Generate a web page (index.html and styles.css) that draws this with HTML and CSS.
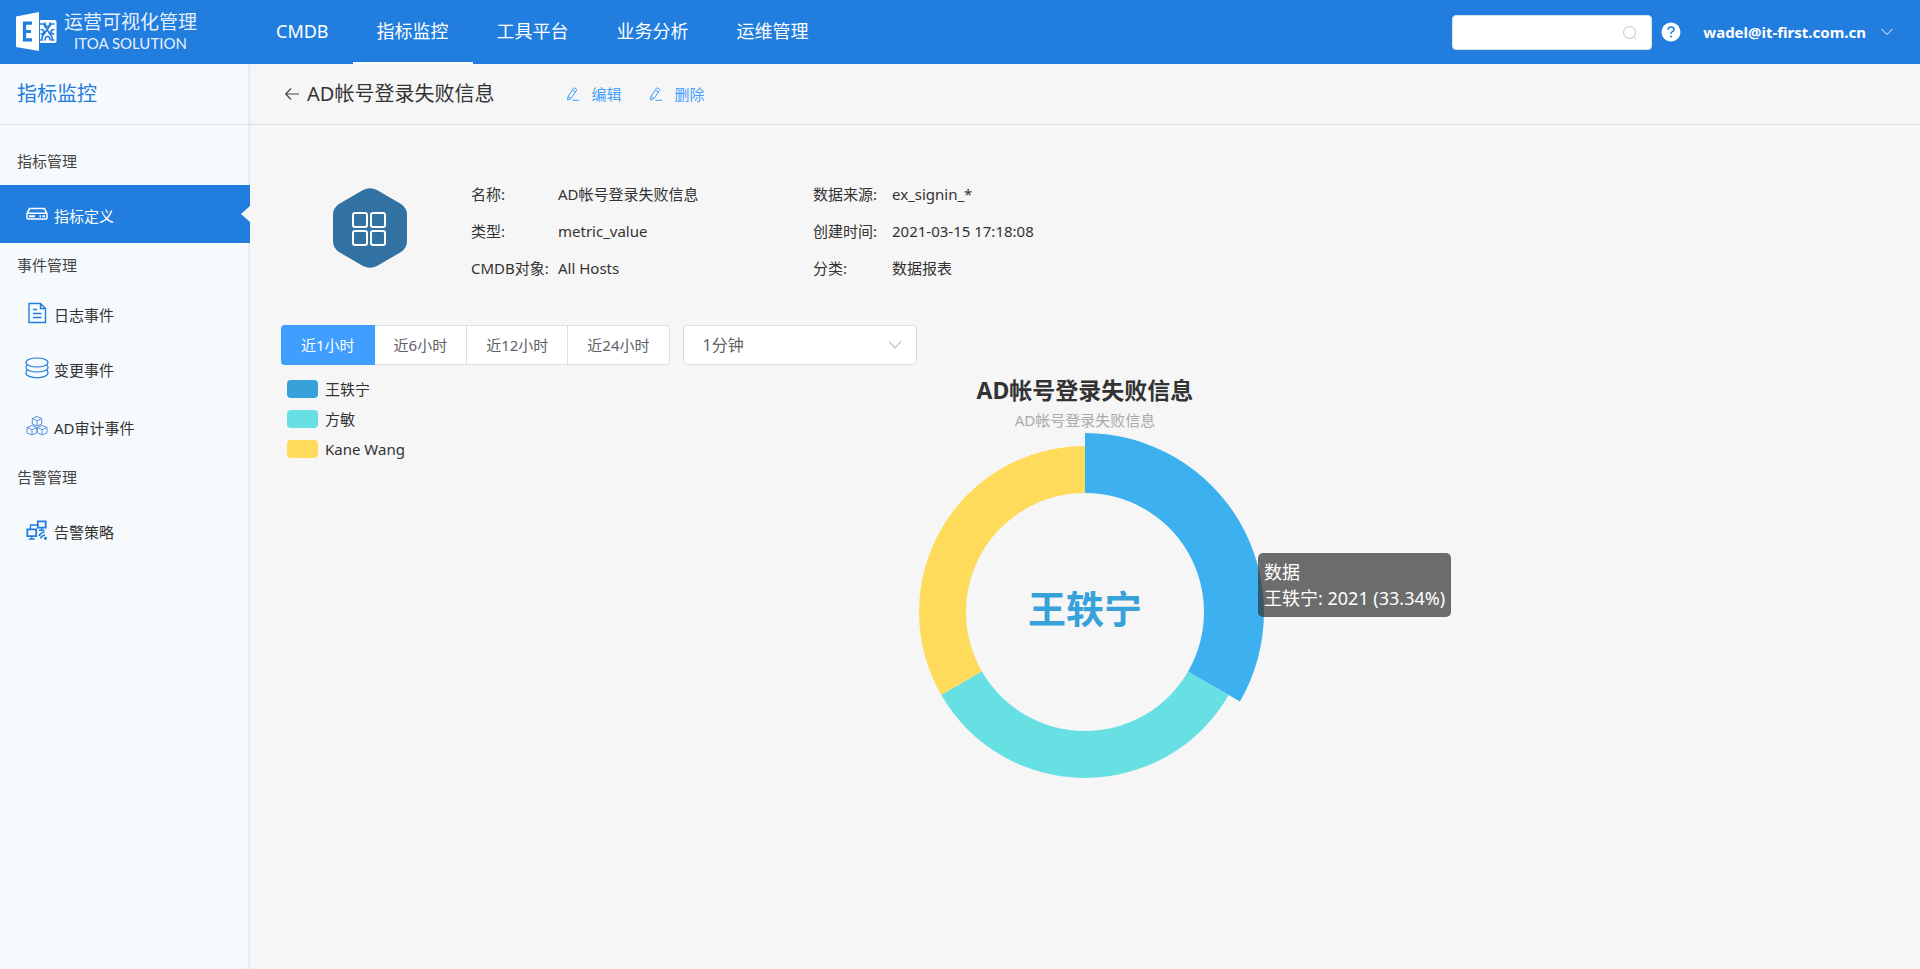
FILE: index.html
```html
<!DOCTYPE html>
<html lang="zh-CN">
<head>
<meta charset="utf-8">
<title>指标监控</title>
<link rel="stylesheet" href="styles.css">
</head>
<body>
<header class="topbar">
  <a class="brand" href="#">
    <svg class="brand-mark" viewBox="0 0 41 40" aria-hidden="true">
      <path fill="#fff" d="M0 4.500 23 0v39L0 35zM24 8h14.500q2 0 2 2v19q0 2-2 2H24z"/>
      <path fill="none" stroke="#217dde" stroke-width="3.200" d="M16 11.200H8.500v16.600H16M8.500 19.500H15"/>
      <path fill="none" stroke="#217dde" stroke-width="1.700" d="M24 12h3.500L36 25v3h2.500M38.500 12H35l-9 13v3h-2M29 10.500q0 4 2.500 4t2.500-4M29 28.500q0-4 2.500-4t2.500 4M24.500 17.500q3.500 0 3.500 2.300T24.500 22M38.500 17.500q-3.500 0-3.500 2.300t3.500 2.200"/>
    </svg>
    <span class="brand-text"><span class="brand-name">运营可视化管理</span><span class="brand-sub">ITOA SOLUTION</span></span>
  </a>
  <nav class="mainnav">
    <a href="#">CMDB</a>
    <a href="#" class="current" aria-current="page">指标监控</a>
    <a href="#">工具平台</a>
    <a href="#">业务分析</a>
    <a href="#">运维管理</a>
  </nav>
  <div class="tools">
    <label class="search">
      <input type="text" aria-label="搜索">
      <svg viewBox="0 0 14 14" aria-hidden="true"><circle cx="6.500" cy="6.500" r="6"/><path d="M10.500 10.500 13 13"/></svg>
    </label>
    <button class="help" type="button" aria-label="帮助">
      <svg viewBox="0 0 20 20" aria-hidden="true"><circle cx="10" cy="10" r="9.500" fill="#fff"/><path fill="none" stroke="#217dde" stroke-width="1.500" d="M7 7.700q0-2.700 3-2.700t3 2.500q0 1.400-1.600 2.200T10 11.800"/><circle cx="10" cy="14.400" r="1" fill="#217dde"/></svg>
    </button>
    <button class="user" type="button">wadel@it-first.com.cn
      <svg viewBox="0 0 12 8" aria-hidden="true"><path d="M.5 1 6 6.500 11.500 1"/></svg>
    </button>
  </div>
</header>
<div class="shell">
  <aside class="sidebar">
    <h2 class="side-title">指标监控</h2>
    <nav class="menu">
      <h3>指标管理</h3>
      <a class="item active" href="#">
        <svg viewBox="0 0 24 24" aria-hidden="true"><path d="M4.500 6.600h15l2.500 5v4.400q0 1-1 1H3q-1 0-1-1v-4.400zM2 11.300h20" stroke-width="1.500"/><path d="M4 14.300h6M14.500 14.300h1.500M17.500 14.300h2.500" stroke-width="2"/></svg>
        <span>指标定义</span>
      </a>
      <h3>事件管理</h3>
      <a class="item short" href="#">
        <svg viewBox="0 0 24 24" aria-hidden="true"><path d="M4 2.500h11.500l5 5v14H4zM15.500 2.500v5h5M8 8.500h4M8 12.500h8.500M8 16.500h8.500" stroke-width="1.400"/></svg>
        <span>日志事件</span>
      </a>
      <a class="item" href="#">
        <svg viewBox="0 0 24 24" aria-hidden="true"><ellipse cx="12" cy="6.500" rx="11" ry="4.500"/><path d="M2.500 8.800Q1 9.800 1 11.500A11 4.500 0 0 0 23 11.500Q23 9.800 21.500 8.800M2.500 13.800Q1 15 1 17A11 4.800 0 0 0 23 17Q23 15 21.500 13.800"/></svg>
        <span>变更事件</span>
      </a>
      <a class="item" href="#">
        <svg class="fine" viewBox="0 0 24 24" aria-hidden="true"><path d="M12 2.500 16.700 4.500v5.500L12 12 7.300 10V4.500zM7.300 4.500 12 6.700l4.700-2.200M12 6.700V12M7 11.500l4.700 2v5.300L7 21l-5-2.200v-5.300zM2 13.500 7 15.700l4.700-2.200M7 15.700V21M17 11.500l5 2v5.300L17 21l-4.700-2.200v-5.300zM12.300 13.500 17 15.700l5-2.200M17 15.700V21"/></svg>
        <span>AD审计事件</span>
      </a>
      <h3>告警管理</h3>
      <a class="item" href="#">
        <svg viewBox="0 0 24 24" aria-hidden="true"><path d="M12.800 3.300h7.900v6.400h-7.900zM2.300 11.300h8.900v6.900H2.300z" stroke-width="1.800"/><path d="M16.700 10v2M14 12.300h5.500M6.700 18.500V21M3.800 21h6M5.500 11V7h6.500" stroke-width="1.400"/><path d="M14 18q1.500-3.500 5.500-4M15.500 20.500q1-3 4.500-3.500" stroke-width="1.700"/><circle cx="20.500" cy="20.300" r="1" fill="#217dde"/></svg>
        <span>告警策略</span>
      </a>
    </nav>
  </aside>
  <main class="page">
    <div class="page-head">
      <button class="back" type="button" aria-label="返回"><svg viewBox="0 0 14 12" aria-hidden="true"><path d="M14 6H1M6 .5.7 6 6 11.500"/></svg></button>
      <h1>AD帐号登录失败信息</h1>
      <div class="actions">
        <button type="button"><svg viewBox="0 0 14 14" aria-hidden="true"><path d="M1.500 13 2 9.500 7.500 1.200q.5-.7 1.200-.2l1.700 1.200q.7.500.2 1.200L5 11.500zM6.500 3l3 2M2 9.500l3 2M6.500 13.300H13"/></svg>编辑</button>
        <button type="button"><svg viewBox="0 0 14 14" aria-hidden="true"><path d="M1.500 13 2 9.500 7.500 1.200q.5-.7 1.200-.2l1.700 1.200q.7.500.2 1.200L5 11.500zM6.500 3l3 2M2 9.500l3 2M6.500 13.300H13"/></svg>删除</button>
      </div>
    </div>
    <section class="summary">
      <svg class="badge" viewBox="0 0 74 80" aria-hidden="true">
        <path fill="#3272a2" d="M30 2q7-3.500 14 0l24 14q6 4 6 11v26q0 7-6 11L44 78q-7 3.500-14 0L6 64q-6-4-6-11V27q0-7 6-11z"/>
        <g fill="none" stroke="#fff" stroke-width="2"><rect x="20" y="25" width="14" height="14" rx="2"/><rect x="38" y="25" width="14" height="14" rx="2"/><rect x="20" y="43" width="14" height="14" rx="2"/><rect x="38" y="43" width="14" height="14" rx="2"/></g>
      </svg>
      <dl class="facts">
        <dt>名称:</dt><dd>AD帐号登录失败信息</dd>
        <dt>类型:</dt><dd>metric_value</dd>
        <dt>CMDB对象:</dt><dd>All Hosts</dd>
      </dl>
      <dl class="facts second">
        <dt>数据来源:</dt><dd>ex_signin_*</dd>
        <dt>创建时间:</dt><dd>2021-03-15 17:18:08</dd>
        <dt>分类:</dt><dd>数据报表</dd>
      </dl>
    </section>
    <div class="filters">
      <div class="ranges" role="group" aria-label="时间范围">
        <button type="button" class="on" aria-pressed="true">近1小时</button>
        <button type="button">近6小时</button>
        <button type="button">近12小时</button>
        <button type="button">近24小时</button>
      </div>
      <div class="interval">
        <select aria-label="间隔"><option>1分钟</option></select>
        <svg viewBox="0 0 14 8" aria-hidden="true"><path d="M1 .5 7 7l6-6.500"/></svg>
      </div>
    </div>
    <section class="chart">
      <ul class="legend">
        <li><i class="swatch blue"></i>王轶宁</li>
        <li><i class="swatch teal"></i>方敏</li>
        <li><i class="swatch gold"></i>Kane Wang</li>
      </ul>
      <div class="plot">
        <h2>AD帐号登录失败信息</h2>
        <p>AD帐号登录失败信息</p>
        <div class="donut">
          <svg viewBox="-176 -176 352 352" aria-hidden="true">
            <path fill="#ffdb5c" d="M-143.760 83A166 166 0 0 1 0-166V-119A119 119 0 0 0-103.060 59.500z"/>
            <path fill="#67e0e3" d="M143.760 83A166 166 0 0 1-143.760 83L-103.060 59.500A119 119 0 0 0 103.060 59.500z"/>
            <path fill="#3db1ef" d="M0-179A179 179 0 0 1 155 89.500L103.060 59.500A119 119 0 0 0 0-119z"/>
          </svg>
          <strong>王轶宁</strong>
          <div class="tooltip" role="tooltip">数据<br>王轶宁: 2021 (33.34%)</div>
        </div>
      </div>
    </section>
  </main>
</div>
</body>
</html>
```
FILE: styles.css
```css
* { box-sizing: border-box; }
body {
  margin: 0;
  min-height: 100vh;
  display: flex;
  flex-direction: column;
  background: #f6f6f6;
  color: #333;
  font: 15px/24px "Noto Sans", "Noto Sans CJK SC", sans-serif;
}
h1, h2, h3, p, dl, dd, ul { margin: 0; padding: 0; font-weight: 400; }
a { color: inherit; text-decoration: none; }
button, input, select { font: inherit; color: inherit; }
button { border: 0; padding: 0; background: none; cursor: pointer; }
svg { display: block; flex: none; overflow: visible; }

.topbar {
  display: flex;
  height: 64px;
  background: #217dde;
  color: #fff;
}
.brand { display: flex; align-items: center; gap: 7px; width: 252px; padding-left: 16px; }
.brand-mark { width: 41px; height: 40px; }
.brand-text { display: flex; flex-direction: column; align-items: center; color: #e6f0fc; }
.brand-name { font-size: 19px; line-height: 22px; }
.brand-sub { font: 15px/20px Lato, sans-serif; }
.mainnav { display: flex; }
.mainnav a { padding: 0 24px; font-size: 18px; line-height: 62px; border-bottom: 2px solid transparent; }
.mainnav .current { border-color: #fff; }
.tools { display: flex; align-items: center; margin-left: auto; padding-right: 27px; }
.search { position: relative; width: 200px; }
.search input {
  display: block;
  width: 100%;
  height: 35px;
  padding: 0 36px 0 12px;
  border: 1px solid #dcdfe6;
  border-radius: 4px;
  background: #fff;
  color: #333;
}
.search svg { position: absolute; right: 15px; top: 11px; width: 14px; height: 14px; fill: none; stroke: #c0c4cc; }
.help { margin: 0 22px 0 9px; }
.help svg { width: 20px; height: 20px; }
.user { display: flex; align-items: center; gap: 15px; font-weight: 700; }
.user svg { width: 12px; height: 8px; fill: none; stroke: #fff; }

.shell { display: flex; flex: 1; }
.sidebar { width: 250px; flex: none; background: #f7fafd; box-shadow: inset -2px 0 2px #e3e8ee; }
.side-title {
  padding: 0 17px;
  border-bottom: 1px solid #dfe1e4;
  color: #217dde;
  font-size: 20px;
  line-height: 60px;
}
.menu { padding-top: 14px; }
.menu h3 { padding: 0 17px 2px; font-size: 15px; line-height: 44px; color: #444; }
.item { display: flex; align-items: center; gap: 5px; height: 58px; padding-left: 25px; position: relative; }
.item.short { height: 50px; padding-bottom: 2px; }
.item span { padding-top: 3px; }
.item svg { width: 24px; height: 24px; fill: none; stroke: #217dde; stroke-width: 1.2; }
.item .fine { stroke: #5b8fdc; stroke-width: 1; }
.item.active { background: #217dde; color: #fff; }
.item.active svg { stroke: #fff; }
.item.active::after {
  content: "";
  position: absolute;
  right: 0;
  top: 21px;
  border: 8px solid transparent;
  border-left-width: 0;
  border-right: 9px solid #f6f6f6;
}

.page { flex: 1; min-width: 0; }
.page-head {
  display: flex;
  align-items: center;
  height: 61px;
  padding-left: 35px;
  border-bottom: 1px solid #dfdfdf;
}
.back svg { width: 14px; height: 12px; fill: none; stroke: #444; stroke-width: 1.2; }
.page-head h1 { margin: 0 72px 0 8px; font-size: 20px; line-height: 30px; }
.actions { display: flex; gap: 28px; color: #409eff; }
.actions button { display: flex; align-items: center; gap: 11px; }
.actions svg { width: 14px; height: 14px; fill: none; stroke: #409eff; }

.summary { display: flex; align-items: flex-start; padding: 51px 30px 38px 83px; }
.badge { width: 74px; height: 80px; margin: 12px 64px 0 0; }
.facts { display: grid; grid-template-columns: 87px 255px; line-height: 37px; }
.facts.second { grid-template-columns: 79px auto; }

.filters { display: flex; gap: 13px; padding: 0 31px; }
.ranges { display: flex; }
.ranges button {
  height: 40px;
  padding: 0 19px;
  border: 1px solid #dcdfe6;
  border-left-width: 0;
  background: #fff;
  color: #606266;
}
.ranges button.on { padding-left: 20px; background: #409eff; border-color: #409eff; color: #fff; border-radius: 4px 0 0 4px; }
.ranges button:last-child { border-radius: 0 4px 4px 0; }
.interval { position: relative; width: 234px; }
.interval select {
  appearance: none;
  width: 100%;
  height: 40px;
  padding: 0 36px 0 19px;
  border: 1px solid #dcdfe6;
  border-radius: 4px;
  background: #fff;
  color: #606266;
  font-size: 16px;
}
.interval svg { position: absolute; right: 15px; top: 16px; width: 14px; height: 8px; fill: none; stroke: #c0c4cc; stroke-width: 1.2; pointer-events: none; }

.chart { display: grid; padding: 9px 31px 0; }
.legend, .plot { grid-area: 1 / 1; }
.legend { justify-self: start; padding-left: 6px; list-style: none; line-height: 30px; }
.legend li { display: flex; align-items: center; gap: 7px; }
.swatch { width: 31px; height: 18px; border-radius: 4px; }
.blue { background: #37a2da; }
.teal { background: #67e0e3; }
.gold { background: #ffdb5c; }
.plot { display: flex; flex-direction: column; align-items: center; }
.plot h2 { font-size: 23px; line-height: 32px; font-weight: 700; }
.plot p { padding-bottom: 2px; line-height: 28px; color: #aaa; }
.donut { position: relative; display: grid; place-items: center; width: 352px; height: 352px; }
.donut > svg, .donut strong { grid-area: 1 / 1; }
.donut > svg { width: 352px; height: 352px; }
.donut strong { padding-bottom: 8px; font-size: 38px; line-height: 50px; color: #37a2da; }
.tooltip {
  position: absolute;
  left: 349px;
  top: 117px;
  padding: 6px;
  border-radius: 5px;
  background: rgba(50, 50, 50, .7);
  color: #fff;
  font-size: 18px;
  line-height: 26px;
  white-space: nowrap;
}
```
